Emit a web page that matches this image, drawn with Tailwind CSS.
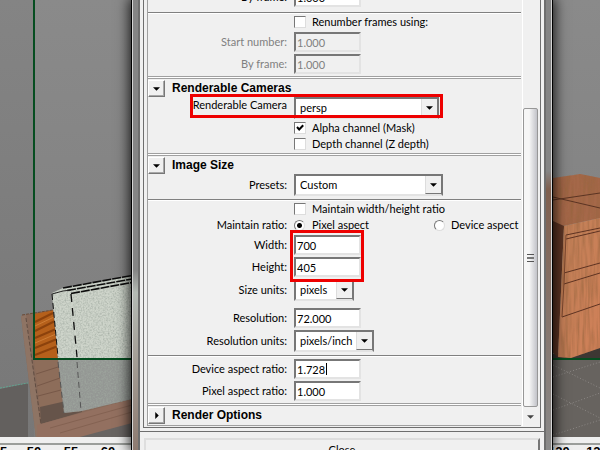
<!DOCTYPE html>
<html lang="en">
<head>
    <meta charset="UTF-8">
    <title>Render Settings</title>
    <script src="https://cdn.jsdelivr.net/npm/@tailwindcss/browser@4"></script>
</head>
<body class="relative h-screen overflow-hidden bg-[#838383] text-black text-[11px] leading-4 font-['Lato',sans-serif]">

    <!-- 3D viewport -->
    <svg class="absolute inset-0 w-full h-full" viewBox="0 0 600 450" preserveAspectRatio="none">
        <defs>
            <linearGradient id="sky" x1="0" y1="0" x2="0" y2="1">
                <stop offset="0" stop-color="#8a8a8a"/>
                <stop offset="1" stop-color="#7c7c7c"/>
            </linearGradient>
            <linearGradient id="front" x1="0" y1="0" x2="1" y2="1">
                <stop offset="0" stop-color="#c08058"/>
                <stop offset="1" stop-color="#d08058"/>
            </linearGradient>
            <filter id="fabric" x="0" y="0" width="1" height="1">
                <feTurbulence type="fractalNoise" baseFrequency="0.6" numOctaves="2" seed="4"/>
                <feColorMatrix values="0 0 0 0 .35  0 0 0 0 .4  0 0 0 0 .35  1.6 0 0 0 -.6"/>
                <feComposite in2="SourceGraphic" operator="in" result="n"/>
                <feMerge><feMergeNode in="SourceGraphic"/><feMergeNode in="n"/></feMerge>
            </filter>
            <filter id="grain" x="0" y="0" width="1" height="1">
                <feTurbulence type="fractalNoise" baseFrequency="0.35 0.03" numOctaves="2" seed="9"/>
                <feColorMatrix values="0 0 0 0 .3  0 0 0 0 .13  0 0 0 0 .05  1.4 0 0 0 -.5"/>
                <feComposite in2="SourceGraphic" operator="in" result="n"/>
                <feMerge><feMergeNode in="SourceGraphic"/><feMergeNode in="n"/></feMerge>
            </filter>
        </defs>
        <rect width="600" height="450" fill="url(#sky)"/>
        <rect width="34" height="450" fill="#000" opacity=".04"/>

        <!-- floor, left -->
        <path d="M0 389L28 383V440H0z" fill="#63605e"/>
        <path d="M36 385H132V440H36z" fill="#686462"/>
        <path d="M0 388L28 383" stroke="#5fa590" stroke-width="1" stroke-dasharray="2 1"/>

        <!-- bookshelf -->
        <path d="M21 316L34 313L53 310L66 413L132 399V422L72 438H36z" fill="#876a5a"/>
        <path d="M21 316L26 315L42 438H36z" fill="#8e7464"/>
        <path d="M26 318L41 424" stroke="#5f4c42" stroke-dasharray="4 2"/>
        <path d="M34 360H58L62 402L40 407z" fill="#8d6d5a"/>
        <path d="M36 374L58 367M37 386L60 378M38 396L61 390" stroke="#775848"/>
        <path d="M40 407L62 402L65 413L82 411V412L41 424z" fill="#66544a"/>
        <path d="M37 425L132 399V423L76 438H37z" fill="#937060"/>
        <path d="M50 428L132 405M60 433L132 412" stroke="#846252"/>
        <path d="M34 314L53 310L58 359H34z" fill="#b5601b"/>
        <path d="M35 322L53 313M35 331L55 321M35 338L56 329M35 348L57 339M35 355L58 346" stroke="#8c420c" stroke-width="2"/>
        <path d="M35 326L54 317M35 343L56 334" stroke="#cd7d35"/>
        <path d="M22 315L53 310" stroke="#6b4a35" stroke-dasharray="3 1"/>

        <!-- fabric panels -->
        <path d="M52 293L63 288L132 276V359H58z" fill="#ced4ca" filter="url(#fabric)"/>
        <path d="M58 359H132V399L82 411L64 413z" fill="#949794" filter="url(#fabric)"/>
        <path d="M63 288L132 275.500M67 290.500L132 279M71 293.500L132 282.500" stroke="#0c0c0c" stroke-width="1.600" stroke-dasharray="9 1"/>
        <path d="M52 294L63 291L71 290" stroke="#222" fill="none"/>
        <path d="M52 294L58 357" stroke="#111" stroke-dasharray="6 3"/>
        <path d="M71 294L77 357" stroke="#111" stroke-width="1.300" stroke-dasharray="8 6"/>
        <path d="M77 362L81 411M58 362L64 413" stroke="#555" stroke-dasharray="6 4"/>

        <!-- cabinet and floor, right -->
        <path d="M553 354L600 345V440H553z" fill="#67635f"/>
        <path d="M553 354L600 345V359H553z" fill="#3d3733"/>
        <path d="M553 178L574 175L580 174L600 178V218L563 226L553 222z" fill="#a5674a" filter="url(#grain)"/>
        <path d="M553 197L600 208M553 200L600 193" stroke="#5b3423"/>
        <path d="M553 221L564 226L558 357L553 353z" fill="#5d3524"/>
        <path d="M564 226L600 218V348L571 358L558 357z" fill="url(#front)" filter="url(#grain)"/>
        <path d="M566 235L600 228M566 239L600 231M564 273L600 263M564 284L600 273M562 317L600 304" stroke="#5e3322" fill="none"/>
        <path d="M566 235L564 283L562 317" stroke="#7c472e" fill="none"/>
        <path d="M553 377L600 362M553 410L600 393M553 435L600 420M553 365L600 388M553 394L600 418" stroke="#8b8784" stroke-dasharray="1 2"/>

        <!-- resolution gate -->
        <path d="M34 0V359H600" fill="none" stroke="#064d20" stroke-width="2"/>

        <!-- time slider -->
        <rect y="437" width="600" height="13" fill="#efefef"/>
        <rect y="443" width="600" height="2" fill="#9b9e9b"/>
        <g font-family="Liberation Sans" font-weight="bold" font-size="13" text-anchor="middle">
            <text x="0" y="456">45</text>
            <text x="34" y="456">50</text>
            <text x="71" y="456">55</text>
            <text x="108" y="456">60</text>
            <text x="559" y="456">120</text>
            <text x="597" y="456">125</text>
        </g>
    </svg>

    <!-- render settings window -->
    <div class="absolute inset-y-0 left-[131px] right-[47px] border-x border-black shadow-[0_0_12px_2px_#000000cc]">
        <div class="flex h-full border-x border-[#d5d5d5] bg-[#8a8a8a]">
            <div class="w-[5px] bg-linear-to-b from-[#858585] from-60% via-[#b4bab4] via-65% to-[#8d7a70]"></div>
            <main class="flex-1 min-w-0 border-x-2 border-[#6e6e6e] bg-[#f0f0f0] overflow-hidden">
                <div class="px-[3px] pb-[3px] border-b border-[#6e6e6e]">
                    <div class="flex pl-[3px] pr-0.5 pb-px border-x border-b border-[#6e6e6e]">
                        <form class="flex-1 min-w-0 overflow-hidden border-l border-b border-[#a0a0a0]">

                            <div class="-mt-[13px] pb-0.5">
                                <div class="flex items-center">
                                    <label for="by1" class="w-[146px] pr-[7px] text-right shrink-0">By frame:</label>
                                    <input id="by1" value="1.000" class="w-[67px] h-5 pl-px bg-white border-2 border-t-[#777] border-l-[#777] border-r-[#e3e3e3] border-b-[#e3e3e3]">
                                </div>
                                <hr class="mt-[5px] h-0.5 border-t border-[#808080] bg-white">
                                <div class="flex items-center h-4 pl-[146px]">
                                    <input id="renum" type="checkbox" class="appearance-none size-3 bg-white border border-t-[#777] border-l-[#777] border-r-[#ddd] border-b-[#ddd]">
                                    <label for="renum" class="pl-1.5 whitespace-nowrap">Renumber frames using:</label>
                                </div>
                                <div class="flex items-center mt-0.5 text-[#808080]">
                                    <label for="start" class="w-[146px] pr-[7px] text-right shrink-0">Start number:</label>
                                    <input id="start" value="1.000" disabled class="w-[67px] h-5 pl-px bg-[#f0f0f0] border-2 border-t-[#777] border-l-[#777] border-r-[#e3e3e3] border-b-[#e3e3e3]">
                                </div>
                                <div class="flex items-center mt-0.5 text-[#808080]">
                                    <label for="by2" class="w-[146px] pr-[7px] text-right shrink-0">By frame:</label>
                                    <input id="by2" value="1.000" disabled class="w-[67px] h-5 pl-px bg-[#f0f0f0] border-2 border-t-[#777] border-l-[#777] border-r-[#e3e3e3] border-b-[#e3e3e3]">
                                </div>
                            </div>

                            <!-- Renderable Cameras -->
                            <section class="border-t border-[#a0a0a0] pb-px">
                                <div class="flex items-start h-5 pt-0.5 border-t border-white shadow-[inset_0_1px_#a0a0a0]">
                                    <button type="button" aria-label="Collapse" class="grid place-items-center size-[17px] shrink-0 border border-t-white border-l-white border-r-[#777] border-b-[#777] shadow-[inset_-1px_-1px_#a8a8a8]">
                                        <svg class="w-[7px] h-1" viewBox="0 0 8 4"><path d="M0 0h8L4 4z"/></svg>
                                    </button>
                                    <h2 class="pl-[7px] text-xs font-bold font-['Liberation_Sans']">Renderable Cameras</h2>
                                </div>
                                <div class="relative flex items-start">
                                    <label for="cam" class="w-[146px] pr-[7px] text-right shrink-0 whitespace-nowrap">Renderable Camera</label>
                                    <div class="relative">
                                        <select id="cam" class="appearance-none block w-[145px] h-[22px] pl-1 bg-white border-2 border-t-[#777] border-l-[#777] border-r-[#777] border-b-[#e3e3e3]"><option>persp</option></select>
                                        <span class="absolute right-0.5 inset-y-0.5 w-4 grid place-items-center pointer-events-none bg-[#f0f0f0] border-l border-[#ddd]">
                                            <svg class="w-[7px] h-1" viewBox="0 0 8 4"><path d="M0 0h8L4 4z"/></svg>
                                        </span>
                                    </div>
                                    <span class="absolute left-[42px] -top-[3px] w-[253px] h-6 border-3 border-[#ee0000] pointer-events-none"></span>
                                </div>
                                <div class="flex items-center h-4 mt-px pl-[146px]">
                                    <span class="relative grid place-items-center">
                                        <input id="alpha" type="checkbox" checked class="appearance-none size-3 bg-white border border-t-[#777] border-l-[#777] border-r-[#ddd] border-b-[#ddd]">
                                        <svg class="absolute size-2 pointer-events-none" viewBox="0 0 8 8"><path d="M1 3L3.200 5.500L7.200 1.200" fill="none" stroke="#000" stroke-width="2"/></svg>
                                    </span>
                                    <label for="alpha" class="pl-1.5 whitespace-nowrap">Alpha channel (Mask)</label>
                                </div>
                                <div class="flex items-center h-4 pl-[146px]">
                                    <input id="depth" type="checkbox" class="appearance-none size-3 bg-white border border-t-[#777] border-l-[#777] border-r-[#ddd] border-b-[#ddd]">
                                    <label for="depth" class="pl-1.5 whitespace-nowrap">Depth channel (Z depth)</label>
                                </div>
                            </section>

                            <!-- Image Size -->
                            <section class="border-t border-[#a0a0a0] pb-0.5">
                                <div class="flex items-start h-5 pt-0.5 border-t border-white shadow-[inset_0_1px_#a0a0a0]">
                                    <button type="button" aria-label="Collapse" class="grid place-items-center size-[17px] shrink-0 border border-t-white border-l-white border-r-[#777] border-b-[#777] shadow-[inset_-1px_-1px_#a8a8a8]">
                                        <svg class="w-[7px] h-1" viewBox="0 0 8 4"><path d="M0 0h8L4 4z"/></svg>
                                    </button>
                                    <h2 class="pl-[7px] text-xs font-bold font-['Liberation_Sans']">Image Size</h2>
                                </div>
                                <div class="flex items-center">
                                    <label for="presets" class="w-[146px] pr-[7px] text-right shrink-0">Presets:</label>
                                    <div class="relative">
                                        <select id="presets" class="appearance-none block w-[149px] h-[22px] pl-1 bg-white border-2 border-t-[#777] border-l-[#777] border-r-[#777] border-b-[#e3e3e3]"><option>Custom</option></select>
                                        <span class="absolute right-0.5 inset-y-0.5 w-4 grid place-items-center pointer-events-none bg-[#f0f0f0] border-l border-b border-l-[#ddd] border-b-[#777]">
                                            <svg class="w-[7px] h-1" viewBox="0 0 8 4"><path d="M0 0h8L4 4z"/></svg>
                                        </span>
                                    </div>
                                </div>
                                <hr class="mt-[3px] h-0.5 border-t border-[#808080] bg-white">
                                <div class="flex items-center h-4 pl-[146px]">
                                    <input id="keep" type="checkbox" class="appearance-none size-3 bg-white border border-t-[#777] border-l-[#777] border-r-[#ddd] border-b-[#ddd]">
                                    <label for="keep" class="pl-1.5 whitespace-nowrap">Maintain width/height ratio</label>
                                </div>
                                <div class="flex items-center h-4" role="radiogroup" aria-labelledby="ratio">
                                    <span id="ratio" class="w-[146px] pr-[7px] text-right shrink-0">Maintain ratio:</span>
                                    <span class="flex items-center w-[140px] shrink-0">
                                        <input id="pixel" type="radio" name="ratio" checked class="appearance-none size-[11px] rounded-full bg-[radial-gradient(#000_2px,#fff_3px)] border border-t-[#777] border-l-[#777] border-r-[#ddd] border-b-[#ddd]">
                                        <label for="pixel" class="pl-[7px]">Pixel aspect</label>
                                    </span>
                                    <input id="device" type="radio" name="ratio" class="appearance-none size-[11px] shrink-0 rounded-full bg-white border border-t-[#777] border-l-[#777] border-r-[#ddd] border-b-[#ddd]">
                                    <label for="device" class="pl-1.5 whitespace-nowrap">Device aspect</label>
                                </div>
                                <div class="relative">
                                    <div class="flex items-center mt-0.5">
                                        <label for="width" class="w-[146px] pr-[7px] text-right shrink-0">Width:</label>
                                        <input id="width" value="700" class="w-[67px] h-5 pl-px bg-white border-2 border-t-[#777] border-l-[#777] border-r-[#e3e3e3] border-b-[#e3e3e3]">
                                    </div>
                                    <div class="flex items-center mt-0.5">
                                        <label for="height" class="w-[146px] pr-[7px] text-right shrink-0">Height:</label>
                                        <input id="height" value="405" class="w-[67px] h-5 pl-px bg-white border-2 border-t-[#777] border-l-[#777] border-r-[#e3e3e3] border-b-[#e3e3e3]">
                                    </div>
                                    <span class="absolute left-[142px] -top-[5px] w-[74px] h-[52px] border-3 border-[#ee0000] pointer-events-none z-10"></span>
                                </div>
                                <div class="flex items-center mt-0.5">
                                    <label for="units" class="w-[146px] pr-[7px] text-right shrink-0">Size units:</label>
                                    <div class="relative">
                                        <select id="units" class="appearance-none block w-[60px] h-[22px] pl-1 bg-white border-2 border-t-[#777] border-l-[#777] border-r-[#777] border-b-[#e3e3e3]"><option>pixels</option></select>
                                        <span class="absolute right-0.5 inset-y-0.5 w-4 grid place-items-center pointer-events-none bg-[#f0f0f0] border-l border-b border-l-[#ddd] border-b-[#777]">
                                            <svg class="w-[7px] h-1" viewBox="0 0 8 4"><path d="M0 0h8L4 4z"/></svg>
                                        </span>
                                    </div>
                                </div>
                                <div class="flex items-center mt-[7px]">
                                    <label for="res" class="w-[146px] pr-[7px] text-right shrink-0">Resolution:</label>
                                    <input id="res" value="72.000" class="w-[67px] h-5 pl-px bg-white border-2 border-t-[#777] border-l-[#777] border-r-[#e3e3e3] border-b-[#e3e3e3]">
                                </div>
                                <div class="flex items-center mt-0.5">
                                    <label for="resunits" class="w-[146px] pr-[7px] text-right shrink-0">Resolution units:</label>
                                    <div class="relative">
                                        <select id="resunits" class="appearance-none block w-20 h-[22px] pl-1 bg-white border-2 border-t-[#777] border-l-[#777] border-r-[#777] border-b-[#e3e3e3]"><option>pixels/inch</option></select>
                                        <span class="absolute right-0.5 inset-y-0.5 w-4 grid place-items-center pointer-events-none bg-[#f0f0f0] border-l border-b border-l-[#ddd] border-b-[#777]">
                                            <svg class="w-[7px] h-1" viewBox="0 0 8 4"><path d="M0 0h8L4 4z"/></svg>
                                        </span>
                                    </div>
                                </div>
                                <hr class="mt-[3px] h-0.5 border-t border-[#808080] bg-white">
                                <div class="flex items-center mt-0.5">
                                    <label for="dar" class="w-[146px] pr-[7px] text-right shrink-0">Device aspect ratio:</label>
                                    <div class="relative flex">
                                        <input id="dar" value="1.728" class="w-[67px] h-5 pl-px bg-white border-2 border-t-[#777] border-l-[#777] border-r-[#e3e3e3] border-b-[#e3e3e3]">
                                        <span class="absolute left-8 top-1 w-px h-3 bg-black"></span>
                                    </div>
                                </div>
                                <div class="flex items-center mt-0.5">
                                    <label for="par" class="w-[146px] pr-[7px] text-right shrink-0">Pixel aspect ratio:</label>
                                    <input id="par" value="1.000" class="w-[67px] h-5 pl-px bg-white border-2 border-t-[#777] border-l-[#777] border-r-[#e3e3e3] border-b-[#e3e3e3]">
                                </div>
                            </section>

                            <!-- Render Options -->
                            <section class="border-t border-[#a0a0a0] pb-px">
                                <div class="flex items-start h-5 pt-0.5 border-t border-white shadow-[inset_0_1px_#a0a0a0]">
                                    <button type="button" aria-label="Expand" class="grid place-items-center size-[17px] shrink-0 border border-t-white border-l-white border-r-[#777] border-b-[#777] shadow-[inset_-1px_-1px_#a8a8a8]">
                                        <svg class="w-1 h-[7px]" viewBox="0 0 4 8"><path d="M0 0v8L4 4z"/></svg>
                                    </button>
                                    <h2 class="pl-[7px] text-xs font-bold font-['Liberation_Sans']">Render Options</h2>
                                </div>
                            </section>
                        </form>

                        <!-- scrollbar -->
                        <div class="flex flex-col w-4 ml-px pt-[108px] border-l border-white">
                            <div class="flex-1 grid place-items-center rounded-xs border border-[#979797] bg-linear-to-r from-[#f6f6f6] from-40% to-[#c2c3c9]">
                                <div class="w-[7px] h-2 border-y border-[#555] grid place-items-center"><i class="w-full h-0.5 bg-[#777]"></i></div>
                            </div>
                            <div class="h-[19px] grid place-items-center">
                                <svg class="w-[7px] h-1" viewBox="0 0 8 4"><path d="M0 0h8L4 4z" fill="#444"/></svg>
                            </div>
                        </div>
                    </div>
                </div>
                <div class="px-1 pt-1.5">
                    <button type="button" class="block w-full h-6 border-2 border-t-[#dedede] border-l-[#dedede] border-r-[#777] border-b-[#777] bg-[#f0f0f0]">Close</button>
                </div>
            </main>
            <div class="w-[5px] bg-linear-to-b from-[#858585] from-38% via-[#80604f] via-42% to-[#8a8a8a]"></div>
        </div>
    </div>
</body>
</html>
